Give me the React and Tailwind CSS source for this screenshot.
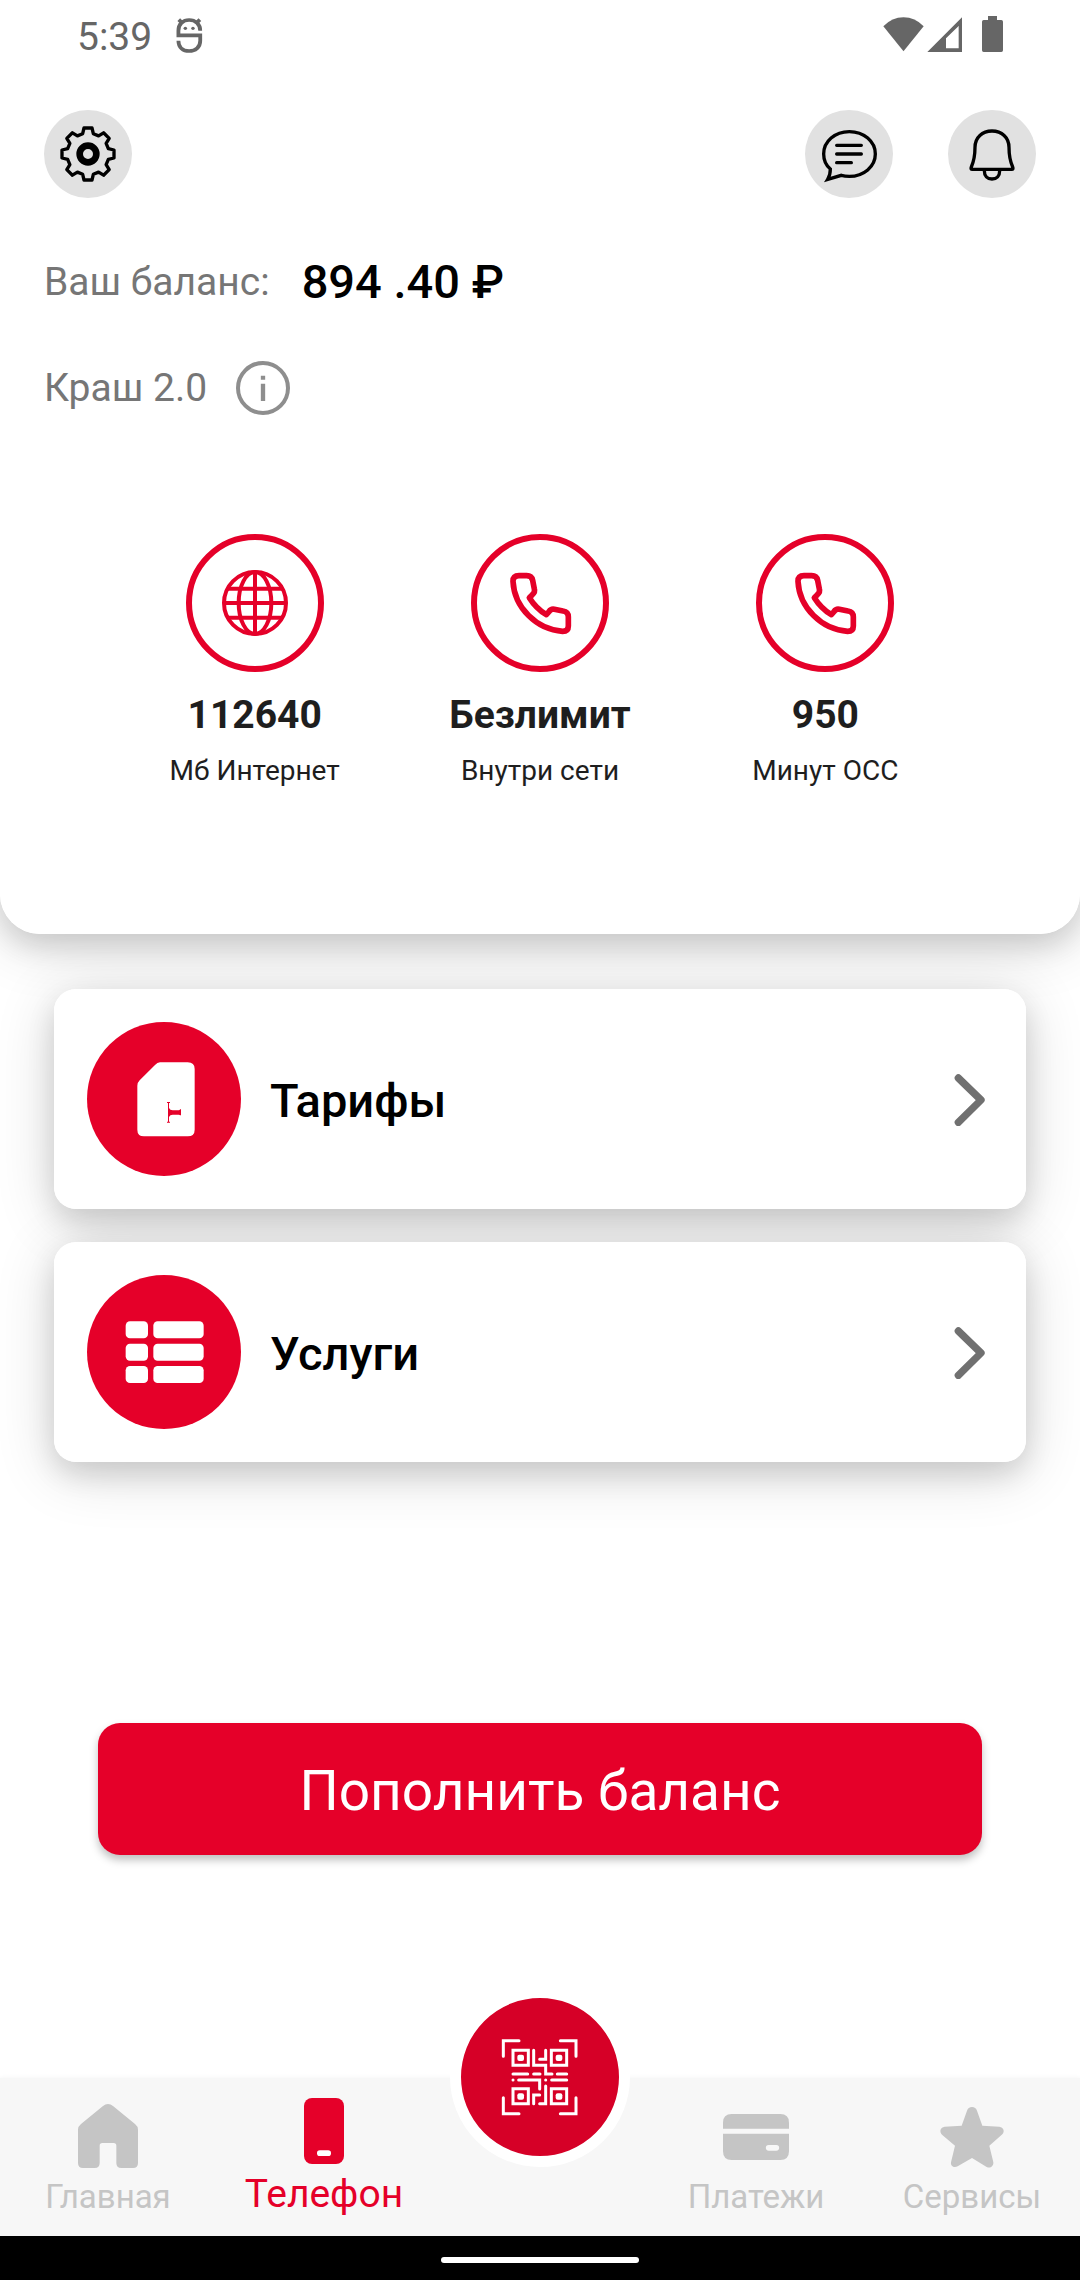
import React from "react";

const GEAR_POINTS = Array.from({ length: 8 })
  .flatMap((_, i) => {
    const a = (i * Math.PI) / 4;
    return [[-16, -61], [-12, -78], [12, -78], [16, -61]].map(([x, y]) =>
      [(x * Math.cos(a) - y * Math.sin(a)).toFixed(1), (x * Math.sin(a) + y * Math.cos(a)).toFixed(1)].join(",")
    );
  })
  .join(" ");

function DebugIcon() {
  return (
    <svg viewBox="509 54 78 114" preserveAspectRatio="none" className="w-[27px] h-[38px]" fill="none" stroke="currentColor" strokeWidth="11">
      <path d="M579 92C579 72 565 60 547 60S516 72 516 92V106H579V122C579 142 565 153 547 153S516 142 516 122" />
      <path d="M517 59L527 69M578 59L568 69" />
      <circle cx="536" cy="85" r="5" fill="currentColor" stroke="none" />
      <circle cx="558" cy="85" r="5" fill="currentColor" stroke="none" />
    </svg>
  );
}

function StatusIcons() {
  return (
    <svg viewBox="309 48 360 126" className="w-[120px] h-[42px]" fill="currentColor">
      <path d="M310 79Q336 52 370.500 52T431 79L370.500 154Z" />
      <path fillRule="evenodd" d="M442 156L546 52V156ZM498 115V145H536V78Z" />
      <path d="M624 48H651V60H664Q669 60 669 65V151Q669 156 664 156H611Q606 156 606 151V65Q606 60 611 60H624Z" />
    </svg>
  );
}

function GearIcon() {
  return (
    <svg viewBox="-90 -90 180 180" className="w-[60px] h-[60px]" fill="none" stroke="currentColor">
      <polygon points={GEAR_POINTS} strokeWidth="10" strokeLinejoin="round" />
      <circle r="25" strokeWidth="20" />
    </svg>
  );
}

function ChatIcon() {
  return (
    <svg viewBox="117 372 180 180" className="w-[60px] h-[60px]" fill="none" stroke="currentColor" strokeWidth="10" strokeLinecap="round">
      <path d="M151 507C138 496 131 481 131 462C131 424 165 395 208 395S286 424 286 462S251 529 208 529C199 529 191 528 184 526L143 538Q151 525 151 507Z" />
      <path d="M170 436H244M170 462H244M170 488H214" />
    </svg>
  );
}

function BellIcon() {
  return (
    <svg viewBox="546 372 180 180" className="w-[60px] h-[60px]" fill="none" stroke="currentColor" strokeWidth="10">
      <path d="M585 442C585 412 607 393 636 393S687 412 687 442C687 472 690 483 698 501Q701 508 695 508H577Q571 508 574 501C582 483 585 472 585 442Z" />
      <path d="M613 512C613 528 622 537 636 537S659 528 659 512" />
    </svg>
  );
}

function InfoIcon() {
  return (
    <svg viewBox="-81 -81 162 162" className="w-[54px] h-[54px]" fill="none" stroke="currentColor">
      <circle r="75" strokeWidth="12" />
      <path d="M0 -13V39M0 -37V-25" strokeWidth="13" />
    </svg>
  );
}

function GlobeIcon() {
  return (
    <svg viewBox="213 177 204 204" className="w-[68px] h-[68px]" fill="none" stroke="currentColor" strokeWidth="12">
      <circle cx="315" cy="279" r="93" />
      <ellipse cx="315" cy="279" rx="49" ry="93" />
      <path d="M315 185V373M222 279H408M232 236H398M232 323H398" />
    </svg>
  );
}

function PhoneIcon() {
  return (
    <svg viewBox="198 177 204 204" className="w-[68px] h-[68px]" fill="none" stroke="currentColor" strokeWidth="17" strokeLinejoin="round">
      <path d="M219 214Q219 197 237 197H260Q275 197 278 211L283 237Q286 246 277 254L268 263Q288 295 319 314L327 305Q333 296 343 298L369 303Q385 305 385 321V348Q385 364 368 364C290 359 223 293 219 214Z" />
    </svg>
  );
}

function SimIcon() {
  return (
    <svg viewBox="393 558 198 198" className="w-[66px] h-[66px] overflow-visible">
      <path
        fill="white"
        d="M480 547H563Q584 547 584 567V749Q584 769 563 769H432Q412 769 412 749V617Q412 608 419 601L465 555Q472 547 480 547Z"
      />
      <path fill="#e50029" d="M501 666H510V669H507V684Q510 691 518 691H536Q540 691 540 688H543V706H540Q540 704 536 704H518Q510 704 507 711V725H510V728H501V725H504V669H501Z" />
    </svg>
  );
}

function ListIcon() {
  return (
    <svg viewBox="375 279 237 234" className="w-[79px] h-[78px]" fill="white">
      {[304, 371, 438].map((y) => (
        <React.Fragment key={y}>
          <rect x="377" y={y} width="67" height="51" rx="13" />
          <rect x="460" y={y} width="151" height="51" rx="13" />
        </React.Fragment>
      ))}
    </svg>
  );
}

function ChevronIcon() {
  return (
    <svg viewBox="222 519 99 162" className="w-[33px] h-[54px] shrink-0" fill="none" stroke="#707070" strokeWidth="22" strokeLinecap="round" strokeLinejoin="round">
      <path d="M235 537L303 603L235 670" />
    </svg>
  );
}

function QrIcon() {
  return (
    <svg viewBox="239 202 240 240" className="w-[80px] h-[80px]" fill="none" stroke="white" strokeWidth="9" strokeLinecap="round">
      <path d="M249 260V213H296M420 213H467V260M467 384V432H420M296 432H249V384" />
      <path d="M278 242H324V287H278ZM393 242H439V287H393ZM278 357H324V402H278ZM393 357H439V402H393Z" />
      <path d="M340 242V287H376V313H395M376 242V269H358M278 313H322M340 313H359M411 313H439M295 331H358V358M394 331H439M376 349V402H358M340 402V376H358M278 331h.1M376 331h.1" />
      <g fill="white" stroke="none">
        <rect x="291" y="255" width="20" height="19" rx="6" />
        <rect x="406" y="255" width="20" height="19" rx="6" />
        <rect x="291" y="371" width="20" height="19" rx="6" />
        <rect x="406" y="371" width="20" height="19" rx="6" />
      </g>
    </svg>
  );
}

function HomeIcon() {
  return (
    <svg viewBox="225 132 198 198" className="w-[66px] h-[66px]" fill="currentColor">
      <path d="M324 132Q332 132 339 138L405 192Q414 199 414 209V309Q414 324 399 324H364Q349 324 349 309V257Q349 249 341 249H307Q299 249 299 257V309Q299 324 284 324H249Q234 324 234 309V209Q234 199 243 192L309 138Q316 132 324 132Z" />
    </svg>
  );
}

function MobileIcon() {
  return (
    <svg viewBox="873 114 198 198" className="w-[66px] h-[66px]">
      <rect x="912" y="114" width="120" height="198" rx="24" fill="currentColor" />
      <rect x="951" y="271" width="42" height="17" rx="8.500" fill="white" />
    </svg>
  );
}

function CardIcon() {
  return (
    <svg viewBox="249 132 198 198" className="w-[66px] h-[66px]" fill="currentColor">
      <path d="M249 206V188Q249 162 275 162H421Q447 162 447 188V206Z" />
      <path fillRule="evenodd" d="M249 221H447V274Q447 300 421 300H275Q249 300 249 274ZM386 255A8.500 8.500 0 0 0 386 272H409A8.500 8.500 0 0 0 409 255Z" />
    </svg>
  );
}

function StarIcon() {
  return (
    <svg viewBox="897 132 198 198" className="w-[66px] h-[66px]" fill="currentColor">
      <path d="M981 152Q985 141 996 141T1011 152L1027 197L1078 200C1091 202 1095 214 1087 223L1048 257L1060 307C1061 320 1050 326 1040 321L996 294L953 319C943 325 931 319 933 307L945 257L906 224C897 214 901 202 914 200L965 197Z" />
    </svg>
  );
}

const stats = [
  { icon: GlobeIcon, value: "112640", label: "Мб Интернет" },
  { icon: PhoneIcon, value: "Безлимит", label: "Внутри сети" },
  { icon: PhoneIcon, value: "950", label: "Минут ОСС" },
];

const sections = [
  { icon: SimIcon, title: "Тарифы" },
  { icon: ListIcon, title: "Услуги" },
];

function NavItem({ icon: Icon, label, active }) {
  return (
    <a
      href="#"
      className={`flex flex-col items-center justify-end gap-[5px] pb-[17px] ${active ? "text-[#e50029]" : "text-[#c5c5c5]"}`}
    >
      <Icon />
      <span className={active ? "text-[39px] leading-[50px]" : "text-[33px] leading-[44px]"}>{label}</span>
    </a>
  );
}

export default function App() {
  return (
    <div className="isolate flex flex-col min-h-screen bg-white text-black font-[Roboto,sans-serif]">
      {/* Account panel */}
      <header className="relative bg-white rounded-b-[40px] pb-[143px] before:absolute before:inset-0 before:-z-10 before:rounded-b-[40px] before:shadow-[0_10px_60px_rgba(0,0,0,0.16),0_12px_28px_rgba(0,0,0,0.12)]">
        <div className="flex items-center justify-between h-[74px] px-[77px] text-[#666666]">
          <div className="flex items-center gap-6">
            <span className="text-[39px] leading-[44px]">5:39</span>
            <DebugIcon />
          </div>
          <StatusIcons />
        </div>

        <div className="px-[44px]">
          <div className="flex items-center mt-9 gap-[55px]">
            <button aria-label="Настройки" className="flex items-center justify-center w-[88px] h-[88px] mr-auto rounded-full bg-[#e1e1e1]">
              <GearIcon />
            </button>
            <button aria-label="Чат" className="flex items-center justify-center w-[88px] h-[88px] rounded-full bg-[#e1e1e1]">
              <ChatIcon />
            </button>
            <button aria-label="Уведомления" className="flex items-center justify-center w-[88px] h-[88px] rounded-full bg-[#e1e1e1]">
              <BellIcon />
            </button>
          </div>

          <div className="flex items-center gap-8 mt-14">
            <span className="text-[39px] leading-[56px] text-[#767676]">Ваш баланс:</span>
            <span className="text-[47px] leading-[56px] font-medium">894 .40 ₽</span>
          </div>
          <div className="flex items-center gap-[29px] mt-[51px] text-[#767676]">
            <span className="text-[39px] leading-[54px]">Краш 2.0</span>
            <button aria-label="О тарифе" className="text-[#8e8e8e]">
              <InfoIcon />
            </button>
          </div>
        </div>

        <div className="grid grid-cols-3 px-[112px] mt-[119px] text-[#1e1e1e]">
          {stats.map(({ icon: Icon, value, label }) => (
            <div key={label} className="flex flex-col items-center text-center">
              <div className="flex items-center justify-center w-[138px] h-[138px] rounded-full border-[6px] border-[#e50029] text-[#e50029]">
                <Icon />
              </div>
              <p className="mt-5 text-[39px] leading-[46px] font-bold">{value}</p>
              <p className="mt-[13px] text-[28px] leading-[40px]">{label}</p>
            </div>
          ))}
        </div>
      </header>

      {/* Sections */}
      <main className="flex-1">
        <div className="flex flex-col gap-[33px] mt-[55px] mx-[54px]">
          {sections.map(({ icon: Icon, title }) => (
            <a
              key={title}
              href="#"
              className="relative flex items-center p-[33px] pr-[39px] bg-white rounded-[22px] before:absolute before:inset-0 before:-z-10 before:rounded-[22px] before:shadow-[0_10px_60px_rgba(0,0,0,0.16),0_12px_28px_rgba(0,0,0,0.12)]"
            >
              <span className="flex items-center justify-center w-[154px] h-[154px] rounded-full bg-[#e50029]">
                <Icon />
              </span>
              <span className="flex-1 pt-1 ml-[29px] text-[47px] leading-[56px] font-medium">{title}</span>
              <ChevronIcon />
            </a>
          ))}
        </div>

        <div className="mt-[261px] px-[98px]">
          <button className="w-full h-[132px] pt-1 rounded-[22px] bg-[#e50029] text-white text-[55px] leading-[64px] shadow-[0_5px_8px_rgba(0,0,0,0.25)]">
            Пополнить баланс
          </button>
        </div>
      </main>

      {/* Bottom navigation */}
      <nav className="grid grid-cols-5 h-[158px] bg-[#f7f7f7] shadow-[0_-1px_4px_#f7f7f7]">
        <NavItem icon={HomeIcon} label="Главная" />
        <NavItem icon={MobileIcon} label="Телефон" active />
        <div className="flex justify-center">
          <button aria-label="Сканировать QR-код" className="flex items-center justify-center w-[180px] h-[180px] -mt-[91px] rounded-full border-[11px] border-white bg-[#d60027]">
            <QrIcon />
          </button>
        </div>
        <NavItem icon={CardIcon} label="Платежи" />
        <NavItem icon={StarIcon} label="Сервисы" />
      </nav>
      <div className="flex items-center justify-center h-[44px] pt-1 bg-black">
        <div className="w-[198px] h-[6px] rounded-full bg-white" />
      </div>
    </div>
  );
}
